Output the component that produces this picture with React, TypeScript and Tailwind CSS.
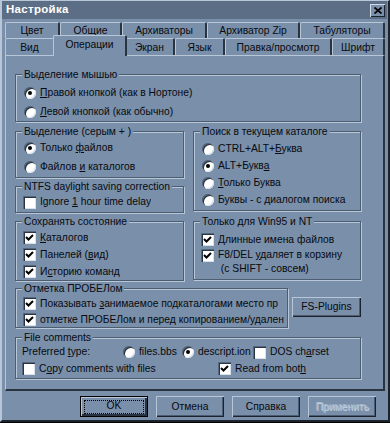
import type { ReactNode } from 'react'

const face = 'bg-[#7a8fa9]'

function Radio({ checked }: { checked?: boolean }) {
  return (
    <span className="w-[12px] h-[12px] shrink-0 rounded-full bg-white flex items-center justify-center shadow-[inset_1px_1px_0_#56687e,inset_2px_2px_0_#2a3440,inset_-1px_-1px_0_#d8e2ec]">
      {checked && <span className="w-[4px] h-[4px] rounded-full bg-black" />}
    </span>
  )
}

function Check({ checked }: { checked?: boolean }) {
  return (
    <span className="w-[13px] h-[13px] shrink-0 bg-white flex items-center justify-center shadow-[inset_1px_1px_0_#56687e,inset_2px_2px_0_#2a3440,inset_-1px_-1px_0_#d8e2ec]">
      {checked && (
        <svg width="9" height="9" viewBox="0 0 9 9">
          <path d="M1 4 L3.5 6.5 L8 2" fill="none" stroke="black" strokeWidth="2" />
        </svg>
      )}
    </span>
  )
}

function Group({ title, className, children }: { title: string; className: string; children?: ReactNode }) {
  return (
    <div className={`relative border border-[#4c5d72] shadow-[1px_1px_0_#b7c7d8,inset_1px_1px_0_#b7c7d8] ${className}`}>
      <span className={`absolute -top-[7px] left-[6px] px-[2px] leading-[13px] ${face}`}>{title}</span>
      {children}
    </div>
  )
}

function RadioRow({ checked, children, className = 'h-[17px]' }: { checked?: boolean; children: ReactNode; className?: string }) {
  return (
    <div className={`flex items-center gap-[4px] ${className}`}>
      <Radio checked={checked} />
      <span className="whitespace-nowrap">{children}</span>
    </div>
  )
}

function CheckRow({ checked, children, className = 'h-[17px]' }: { checked?: boolean; children: ReactNode; className?: string }) {
  return (
    <div className={`flex items-center gap-[4px] ${className}`}>
      <Check checked={checked} />
      <span className="whitespace-nowrap overflow-hidden">{children}</span>
    </div>
  )
}

function Tab({ label, w, selected }: { label: string; w: string; selected?: boolean }) {
  if (selected) {
    return (
      <div className={`${w} h-[21px] -mt-[2px] -mx-[2px] relative z-10 ${face} rounded-t-[2px] border-l border-t border-[#b7c7d8] border-r-2 border-r-[#2a3440] flex items-center justify-center pb-[2px]`}>
        {label}
      </div>
    )
  }
  return (
    <div className={`${w} h-full rounded-t-[2px] border-l border-t border-[#b7c7d8] border-r-2 border-r-[#2a3440] flex items-center justify-center`}>
      {label}
    </div>
  )
}

function Button({ children, focused, disabled }: { children: ReactNode; focused?: boolean; disabled?: boolean }) {
  return (
    <div
      className={`w-[68px] h-[21px] flex items-center justify-center ${
        focused
          ? 'border border-black shadow-[inset_1px_1px_0_#b7c7d8,inset_-2px_-2px_0_#2a3440]'
          : 'shadow-[inset_1px_1px_0_#b7c7d8,inset_-1px_-1px_0_#1c232c,inset_-2px_-2px_0_#4c5d72]'
      }`}
    >
      {focused ? (
        <span className="w-[60px] h-[14px] border border-dotted border-black flex items-center justify-center leading-none">{children}</span>
      ) : (
        <span className={disabled ? 'text-[#a9bbcf] [text-shadow:1px_1px_0_#c8d4e0]' : ''}>{children}</span>
      )}
    </div>
  )
}

export default function App() {
  return (
    <div className="w-[390px] h-[423px] bg-black">
      <div className={`w-[390px] h-[422px] ${face} border-l-2 border-t border-[#b7c7d8] border-r-2 border-r-[#1c232c] border-b-2 border-b-[#1c232c] flex flex-col font-['Liberation_Sans',Arial,sans-serif] text-[10.3px] text-[#070a10]`}>
        {/* Title bar */}
        <div className="h-[18px] mr-[1px] bg-[#5b6e86] flex items-center justify-between pl-[4px] pr-[2px]">
          <span className="font-bold text-white text-[11.5px] tracking-[0.3px]">Настройка</span>
          <div className={`w-[15px] h-[13px] ${face} shadow-[inset_1px_1px_0_#d0dbe6,inset_-1px_-1px_0_#1c232c] flex items-center justify-center`}>
            <svg width="8" height="7" viewBox="0 0 8 7">
              <path d="M0.5 0.5 L7.5 6.5 M7.5 0.5 L0.5 6.5" stroke="black" strokeWidth="1.8" />
            </svg>
          </div>
        </div>

        {/* Tabs */}
        <div className="mt-[3px] pl-[3px]">
          <div className="flex h-[16px]">
            <Tab label="Цвет" w="w-[55px]" />
            <Tab label="Общие" w="w-[62px]" />
            <Tab label="Архиваторы" w="w-[85px]" />
            <Tab label="Архиватор Zip" w="w-[93px]" />
            <Tab label="Табуляторы" w="w-[85px]" />
          </div>
          <div className="flex h-[18px] items-end">
            <Tab label="Вид" w="w-[50px]" />
            <Tab label="Операции" w="w-[74px]" selected />
            <Tab label="Экран" w="w-[50px]" />
            <Tab label="Язык" w="w-[50px]" />
            <Tab label="Правка/просмотр" w="w-[107px]" />
            <Tab label="Шрифт" w="w-[53px]" />
          </div>
        </div>

        {/* Panel */}
        <div className="ml-[3px] w-[380px] h-[336px] -mt-[1px] border-l border-t border-[#b7c7d8] border-r-2 border-b-2 border-r-[#2a3440] border-b-[#2a3440] pl-[9px] pt-[18px]">
          <Group title="Выделение мышью" className="w-[346px] h-[48px] pt-[9px] pl-[8px] flex flex-col gap-[2px]">
            <RadioRow checked><u>П</u>равой кнопкой (как в Нортоне)</RadioRow>
            <RadioRow><u>Л</u>евой кнопкой (как обычно)</RadioRow>
          </Group>

          <div className="flex gap-[9px] mt-[9px]">
            <div className="w-[169px] flex flex-col">
              <Group title="Выделение (серым + )" className="h-[47px] pt-[7px] pl-[8px] flex flex-col gap-[2px]">
                <RadioRow checked>Только <u>ф</u>айлов</RadioRow>
                <RadioRow>Файлов <u>и</u> каталогов</RadioRow>
              </Group>
              <Group title="NTFS daylight saving correction" className="mt-[8px] h-[27px] pt-[7px] pl-[7px]">
                <CheckRow className="h-[16px]">Ignore <u>1</u> hour time delay</CheckRow>
              </Group>
              <Group title="Сохранять состояние" className="mt-[8px] h-[60px] pt-[7px] pl-[7px] flex flex-col">
                <CheckRow checked><u>К</u>аталогов</CheckRow>
                <CheckRow checked>Панелей (<u>в</u>ид)</CheckRow>
                <CheckRow checked>И<u>с</u>торию команд</CheckRow>
              </Group>
            </div>
            <div className="w-[168px] flex flex-col">
              <Group title="Поиск в текущем каталоге" className="h-[80px] pt-[8px] pl-[8px] flex flex-col">
                <RadioRow>CTRL+ALT+<u>Б</u>уква</RadioRow>
                <RadioRow checked>ALT+Букв<u>а</u></RadioRow>
                <RadioRow><u>Т</u>олько Буква</RadioRow>
                <RadioRow>Буквы - с диалогом поиска</RadioRow>
              </Group>
              <Group title="Только для Win95 и NT" className="mt-[10px] h-[59px] pt-[9px] pl-[7px] flex flex-col">
                <CheckRow checked><u>Д</u>линные имена файлов</CheckRow>
                <div className="flex gap-[4px] items-start">
                  <span className="mt-[1px]"><Check checked /></span>
                  <span className="leading-[14px] whitespace-nowrap">
                    F8/DEL <u>у</u>даляет в корзину
                    <br />
                    &nbsp;(с SHIFT - совсем)
                  </span>
                </div>
              </Group>
            </div>
          </div>

          <div className="flex items-start mt-[7px]">
            <Group title="Отметка ПРОБЕЛом" className="w-[273px] h-[40px] pt-[7px] pl-[7px] pr-[3px] flex flex-col gap-[1px]">
              <CheckRow checked className="h-[15px]">Показывать <u>з</u>анимаемое подкаталогами место пр</CheckRow>
              <CheckRow checked className="h-[15px]">отметке ПРОБЕЛом и перед копированием/удален</CheckRow>
            </Group>
            <div className="ml-[4px] mt-[9px] w-[69px] h-[20px] flex items-center justify-center shadow-[inset_1px_1px_0_#b7c7d8,inset_-1px_-1px_0_#1c232c,inset_-2px_-2px_0_#4c5d72]">
              FS-Plugins
            </div>
          </div>

          <Group title="File comments" className="mt-[9px] w-[346px] h-[42px] pt-[6px] pl-[6px] flex flex-col">
            <div className="flex items-center h-[16px]">
              <span className="w-[101px]">Preferred <u>t</u>ype:</span>
              <div className="w-[59px]"><RadioRow className="h-[16px]">files.bbs</RadioRow></div>
              <div className="w-[71px]"><RadioRow checked className="h-[16px]">descript.ion</RadioRow></div>
              <CheckRow className="h-[16px]">DOS ch<u>a</u>rset</CheckRow>
            </div>
            <div className="flex items-center h-[17px]">
              <div className="w-[196px]"><CheckRow className="h-[17px]">C<u>o</u>py comments with files</CheckRow></div>
              <CheckRow checked className="h-[17px]">Read from bot<u>h</u></CheckRow>
            </div>
          </Group>
        </div>

        {/* Buttons */}
        <div className="flex justify-end gap-[8px] pr-[12px] mt-[5px]">
          <Button focused>OK</Button>
          <Button>Отмена</Button>
          <Button>Справка</Button>
          <Button disabled>Применить</Button>
        </div>
      </div>
    </div>
  )
}
